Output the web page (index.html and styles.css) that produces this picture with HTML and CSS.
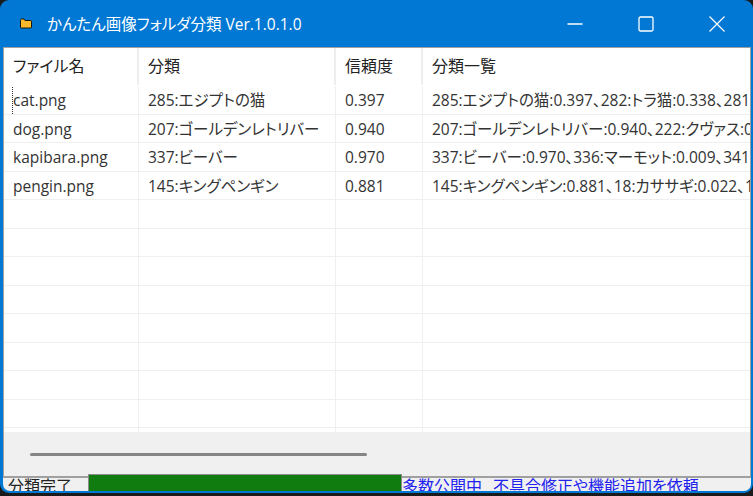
FILE: index.html
```html
<!DOCTYPE html>
<html lang="ja">
<head>
<meta charset="utf-8">
<title>かんたん画像フォルダ分類</title>
<link rel="stylesheet" href="styles.css">
</head>
<body>
<div class="window">
  <header class="titlebar">
    <svg class="app-icon" width="12" height="11" viewBox="0 0 12 11"><path d="M.5 2.5q0-1.500 1-1.500h2.500l1 1.500h5.500q1 0 1 1v5.500q0 1-1 1h-9q-1 0-1-1z" fill="#f9b92c" stroke="#1a1408"/></svg>
    <div class="title">かんたん画像フォルダ分類 Ver.1.0.1.0</div>
    <div class="controls">
      <svg class="ctl" width="16" height="16" viewBox="0 0 16 16"><path d="M.5 8h15" stroke="#fff" stroke-width="1.300"/></svg>
      <svg class="ctl" width="16" height="16" viewBox="0 0 16 16"><rect x="1" y="1" width="14" height="14" rx="1.500" fill="none" stroke="#fff" stroke-width="1.300"/></svg>
      <svg class="ctl" width="16" height="16" viewBox="0 0 16 16"><path d="M.5.500l15 15M15.500.500l-15 15" stroke="#fff" stroke-width="1.200"/></svg>
    </div>
  </header>
  <div class="client">
    <div class="list">
      <div class="head">
        <div class="hc c1">ファイル名</div>
        <div class="hc c2">分類</div>
        <div class="hc c3">信頼度</div>
        <div class="hc c4">分類一覧</div>
      </div>
      <div class="rows">
        <div class="row focus">
          <div class="cell c1">cat.png</div><div class="cell c2">285:エジプトの猫</div><div class="cell c3">0.397</div><div class="cell c4">285:エジプトの猫:0.397、282:トラ猫:0.338、281:トラ猫:0.1</div>
        </div>
        <div class="row">
          <div class="cell c1">dog.png</div><div class="cell c2">207:ゴールデンレトリバー</div><div class="cell c3">0.940</div><div class="cell c4">207:ゴールデンレトリバー:0.940、222:クヴァス:0.012</div>
        </div>
        <div class="row">
          <div class="cell c1">kapibara.png</div><div class="cell c2">337:ビーバー</div><div class="cell c3">0.970</div><div class="cell c4">337:ビーバー:0.970、336:マーモット:0.009、341:イノシシ</div>
        </div>
        <div class="row">
          <div class="cell c1">pengin.png</div><div class="cell c2">145:キングペンギン</div><div class="cell c3">0.881</div><div class="cell c4">145:キングペンギン:0.881、18:カササギ:0.022、146:アホウドリ</div>
        </div>
        <div class="row"><div class="cell c1"></div><div class="cell c2"></div><div class="cell c3"></div><div class="cell c4"></div></div>
        <div class="row"><div class="cell c1"></div><div class="cell c2"></div><div class="cell c3"></div><div class="cell c4"></div></div>
        <div class="row"><div class="cell c1"></div><div class="cell c2"></div><div class="cell c3"></div><div class="cell c4"></div></div>
        <div class="row"><div class="cell c1"></div><div class="cell c2"></div><div class="cell c3"></div><div class="cell c4"></div></div>
        <div class="row"><div class="cell c1"></div><div class="cell c2"></div><div class="cell c3"></div><div class="cell c4"></div></div>
        <div class="row"><div class="cell c1"></div><div class="cell c2"></div><div class="cell c3"></div><div class="cell c4"></div></div>
        <div class="row"><div class="cell c1"></div><div class="cell c2"></div><div class="cell c3"></div><div class="cell c4"></div></div>
        <div class="row"><div class="cell c1"></div><div class="cell c2"></div><div class="cell c3"></div><div class="cell c4"></div></div>
        <div class="row last"><div class="cell c1"></div><div class="cell c2"></div><div class="cell c3"></div><div class="cell c4"></div></div>
      </div>
      <div class="hscroll"><div class="thumb"></div></div>
    </div>
    <footer class="status">
      <span class="status-text">分類完了</span>
      <div class="progress"></div>
      <a class="link" href="#">多数公開中</a>
      <a class="link link2" href="#">不具合修正や機能追加を依頼</a>
    </footer>
  </div>
</div>
</body>
</html>
```
FILE: styles.css
```css
html, body {
  margin: 0;
  padding: 0;
  width: 753px;
  height: 496px;
  overflow: hidden;
  background: #1b1b1b;
}
.window {
  width: 753px;
  height: 493px;
  background: #0078d4;
  border-radius: 9px;
  display: flex;
  flex-direction: column;
  overflow: hidden;
  font-family: "Open Sans", "Noto Sans CJK JP", sans-serif;
  font-feature-settings: "palt";
}
.titlebar {
  height: 47px;
  flex: none;
  display: flex;
  align-items: center;
  padding-left: 20px;
  color: #fff;
}
.app-icon { flex: none; margin-right: 15px; }
.title { font-size: 15.500px; flex: 1; white-space: nowrap; }
.controls {
  display: flex;
  gap: 55px;
  padding-right: 28px;
  align-items: center;
}
.ctl { display: block; }
.client {
  flex: 1;
  min-height: 0;
  margin: 0 2px 2px 3px;
  background: #f0f0f0;
  display: flex;
  flex-direction: column;
  border-radius: 0 0 7px 7px;
  overflow: hidden;
}
.list {
  height: 431px;
  flex: none;
  background: #fff;
  border: 1px solid #a0a0a0;
  border-width: 1px 1px 2px 1px;
  box-sizing: border-box;
  display: flex;
  flex-direction: column;
}
.head {
  height: 38px;
  flex: none;
  display: flex;
  font-size: 16px;
  color: #222;
}
.hc {
  box-sizing: border-box;
  padding-left: 9px;
  line-height: 36px;
  height: 37px;
  border-right: 2px solid #eeeeee;
  white-space: nowrap;
}
.rows { flex: 1; min-height: 0; overflow: hidden; }
.row {
  height: 28.500px;
  display: flex;
  box-sizing: border-box;
  border-bottom: 1.500px solid #efefef;
  font-size: 15.500px;
  color: #333;
  position: relative;
}
.cell {
  box-sizing: border-box;
  padding-left: 9px;
  line-height: 28px;
  border-right: 1.500px solid #efefef;
  white-space: nowrap;
  overflow: hidden;
}
.c1 { width: 135px; }
.c2 { width: 197px; }
.c3 { width: 87px; }
.c4 { flex: 1; border-right: 0; }
.focus::after {
  content: "";
  position: absolute;
  left: 8px;
  right: 0;
  top: -1px;
  bottom: 0;
  border: 1px dotted #333;
  border-right: 0;
  border-bottom: 0;
  border-top-left-radius: 1px;
  pointer-events: none;
}
.last { border-bottom: 1.500px solid #efefef; }
.hscroll {
  height: 44px;
  flex: none;
  background: #f0f0f0;
  display: flex;
  align-items: center;
  padding-left: 26px;
}
.thumb {
  width: 337px;
  height: 3px;
  background: #858585;
  border-radius: 2px;
}
.status {
  flex: 1;
  min-height: 0;
  display: flex;
  align-items: center;
  padding-left: 5px;
  font-size: 16px;
  color: #222;
}
.status-text { width: 80px; flex: none; white-space: nowrap; }
.progress {
  width: 314px;
  height: 22px;
  box-sizing: border-box;
  flex: none;
  background: #107c10;
  border: 1px solid #8b8b8b;
}
.link { color: #2222ee; text-decoration: underline; white-space: nowrap; margin-left: 0; }
.link2 { margin-left: 11px; }
```
